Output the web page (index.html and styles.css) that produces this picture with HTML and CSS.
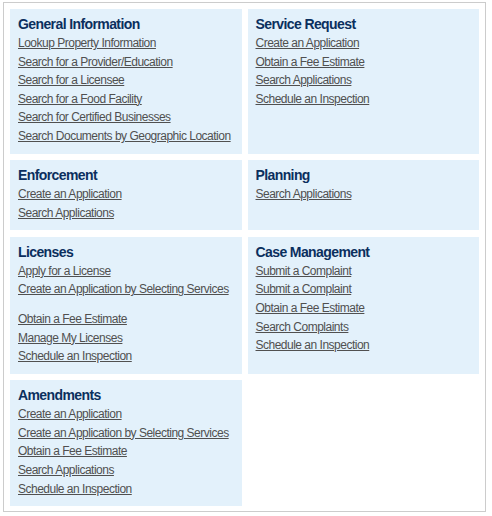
FILE: index.html
```html
<!DOCTYPE html>
<html lang="en">
<head>
  <meta charset="UTF-8" />
  <title>Services</title>
  <link rel="stylesheet" href="styles.css">
</head>
<body>
  <div class="panel">
    <div class="modulo">
      <h2>General Information</h2>
      <a href="#">Lookup Property Information</a>
      <a href="#">Search for a Provider/Education</a>
      <a href="#">Search for a Licensee</a>
      <a href="#">Search for a Food Facility</a>
      <a href="#">Search for Certified Businesses</a>
      <a href="#">Search Documents by Geographic Location</a>
    </div>

    <div class="modulo">
      <h2>Service Request</h2>
      <a href="#">Create an Application</a>
      <a href="#">Obtain a Fee Estimate</a>
      <a href="#">Search Applications</a>
      <a href="#">Schedule an Inspection</a>
    </div>

    <div class="modulo">
      <h2>Enforcement</h2>
      <a href="#">Create an Application</a>
      <a href="#">Search Applications</a>
    </div>

    <div class="modulo">
      <h2>Planning</h2>
      <a href="#">Search Applications</a>
    </div>

    <div class="modulo">
      <h2>Licenses</h2>
      <a href="#">Apply for a License</a>
      <a href="#">Create an Application by Selecting Services</a>
      <div class="hueco"></div>
      <a href="#">Obtain a Fee Estimate</a>
      <a href="#">Manage My Licenses</a>
      <a href="#">Schedule an Inspection</a>
    </div>

    <div class="modulo">
      <h2>Case Management</h2>
      <a href="#">Submit a Complaint</a>
      <a href="#">Submit a Complaint</a>
      <a href="#">Obtain a Fee Estimate</a>
      <a href="#">Search Complaints</a>
      <a href="#">Schedule an Inspection</a>
    </div>

    <div class="modulo">
      <h2>Amendments</h2>
      <a href="#">Create an Application</a>
      <a href="#">Create an Application by Selecting Services</a>
      <a href="#">Obtain a Fee Estimate</a>
      <a href="#">Search Applications</a>
      <a href="#">Schedule an Inspection</a>
    </div>
  </div>
</body>
</html>
```

FILE: styles.css
```css
body {
  margin: 2px 0 0 3px;
  font-family: "Liberation Sans", Arial, sans-serif;
  background: #fff;
}

.panel {
  width: 469px;
  height: 498px;
  border: 1px solid #cccccc;
  padding: 6px 6px 4px 6px;
  display: grid;
  grid-template-columns: minmax(0, 1fr) minmax(0, 1fr);
  grid-template-rows: auto auto auto auto 1fr;
  row-gap: 6.5px;
  column-gap: 6px;
  align-content: start;
}

.modulo {
  background-color: #e3f1fb;
  padding: 6px 8px 8px 8px;
}

.modulo h2 {
  margin: 0 0 1px 0;
  font-size: 14px;
  line-height: 18px;
  font-weight: bold;
  letter-spacing: -0.6px;
  color: #0b2f5e;
}

.modulo a {
  display: block;
  width: max-content;
  font-size: 12px;
  line-height: 18.6px;
  letter-spacing: -0.5px;
  color: #505050;
  text-decoration: underline;
}

.hueco {
  height: 11px;
}
```
